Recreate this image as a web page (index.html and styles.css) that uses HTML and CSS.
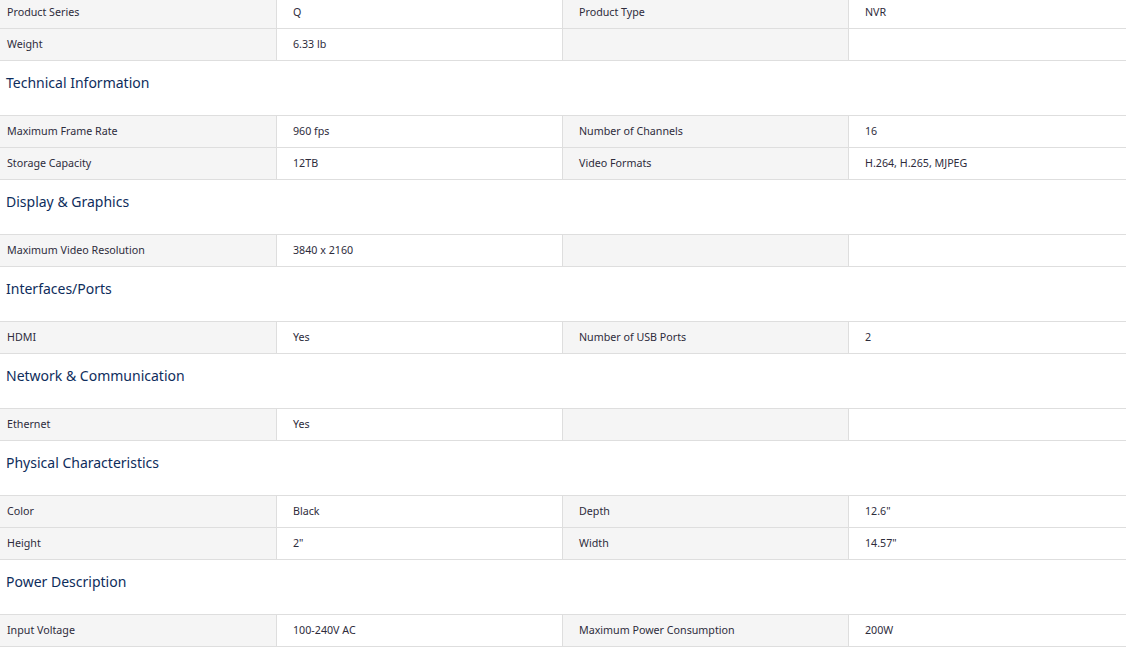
FILE: index.html
```html
<!DOCTYPE html>
<html>
<head>
<meta charset="utf-8">
<link rel="stylesheet" href="styles.css">
</head>
<body>
<div class="specs">
  <div class="table">
    <div class="row"><div class="cell label">Product Series</div><div class="cell value">Q</div><div class="cell label">Product Type</div><div class="cell value">NVR</div></div>
    <div class="row"><div class="cell label">Weight</div><div class="cell value">6.33 lb</div><div class="cell label"></div><div class="cell value"></div></div>
  </div>
  <h3 class="heading">Technical Information</h3>
  <div class="table">
    <div class="row"><div class="cell label">Maximum Frame Rate</div><div class="cell value">960 fps</div><div class="cell label">Number of Channels</div><div class="cell value">16</div></div>
    <div class="row"><div class="cell label">Storage Capacity</div><div class="cell value">12TB</div><div class="cell label">Video Formats</div><div class="cell value">H.264, H.265, MJPEG</div></div>
  </div>
  <h3 class="heading">Display &amp; Graphics</h3>
  <div class="table">
    <div class="row"><div class="cell label">Maximum Video Resolution</div><div class="cell value">3840 x 2160</div><div class="cell label"></div><div class="cell value"></div></div>
  </div>
  <h3 class="heading">Interfaces/Ports</h3>
  <div class="table">
    <div class="row"><div class="cell label">HDMI</div><div class="cell value">Yes</div><div class="cell label">Number of USB Ports</div><div class="cell value">2</div></div>
  </div>
  <h3 class="heading">Network &amp; Communication</h3>
  <div class="table">
    <div class="row"><div class="cell label">Ethernet</div><div class="cell value">Yes</div><div class="cell label"></div><div class="cell value"></div></div>
  </div>
  <h3 class="heading">Physical Characteristics</h3>
  <div class="table">
    <div class="row"><div class="cell label">Color</div><div class="cell value">Black</div><div class="cell label">Depth</div><div class="cell value">12.6"</div></div>
    <div class="row"><div class="cell label">Height</div><div class="cell value">2"</div><div class="cell label">Width</div><div class="cell value">14.57"</div></div>
  </div>
  <h3 class="heading">Power Description</h3>
  <div class="table">
    <div class="row"><div class="cell label">Input Voltage</div><div class="cell value">100-240V AC</div><div class="cell label">Maximum Power Consumption</div><div class="cell value">200W</div></div>
  </div>
</div>
</body>
</html>
```
FILE: styles.css
```css
html, body {
  margin: 0;
  padding: 0;
  background: #ffffff;
  overflow: hidden;
}
body {
  font-family: "Noto Sans", "Open Sans", sans-serif;
  color: #2e2c3c;
}
.specs {
  width: 1126px;
  margin-top: -4px;
}
.table {
  border-top: 1px solid #dedede;
}
.row {
  display: grid;
  grid-template-columns: 276px 286px 286px 278px;
  border-bottom: 1px solid #dedede;
}
.cell {
  height: 31px;
  line-height: 31px;
  font-size: 10.7px;
  padding-left: 16px;
  box-sizing: border-box;
  white-space: nowrap;
}
.cell + .cell {
  border-left: 1px solid #dedede;
}
.row .cell:first-child {
  padding-left: 7px;
}
.label {
  background: #f5f5f5;
}
.value {
  background: #ffffff;
}
.heading {
  margin: 0;
  height: 54px;
  box-sizing: border-box;
  padding: 12px 0 0 6px;
  font-size: 14px;
  line-height: 20px;
  font-weight: 400;
  color: #0e2d5c;
}
```
